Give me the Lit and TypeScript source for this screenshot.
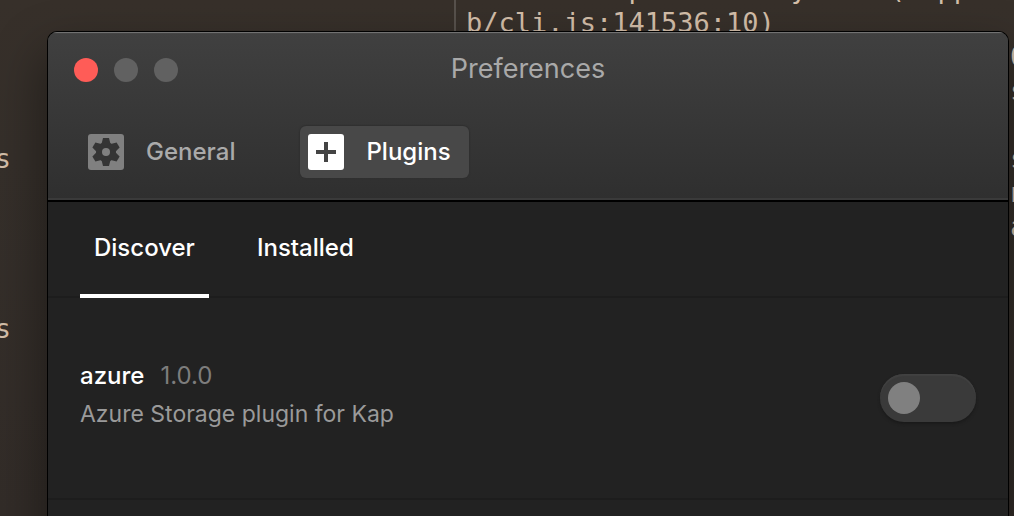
import { LitElement, html, css } from "lit";
import { customElement, property, state } from "lit/decorators.js";

interface Plugin {
  name: string;
  version: string;
  description: string;
}

const PLUGINS: Plugin[] = [
  { name: "azure", version: "1.0.0", description: "Azure Storage plugin for Kap" },
];

@customElement("terminal-backdrop")
class TerminalBackdrop extends LitElement {
  static styles = css`
    :host {
      display: flex;
      height: 100%;
      overflow: hidden;
      background: linear-gradient(#37302a, #352f2a 30%, #322c28);
      color: #d3bea9;
      font: 27px/34px "DejaVu Sans Mono", "Liberation Mono", monospace;
    }
    .pane {
      min-width: 0;
    }
    .lines {
      margin-top: -28px;
    }
    .left {
      flex: 0 0 454px;
    }
    .left .line {
      width: 11px;
      direction: rtl;
    }
    .right {
      flex: 1;
      border-left: 2px solid #57514c;
      padding-left: 10px;
    }
    .line {
      height: 34px;
      overflow: hidden;
      white-space: pre;
    }
    .edge {
      display: flex;
      justify-content: flex-end;
    }
    .edge span {
      width: 4px;
    }
  `;
  private left = ["", "", "", "", "", "s", "", "", "", "", "s"];
  private edge = ["0", "s", "", "s", "n", "a"];
  render() {
    return html`
      <div class="pane left">
        <div class="lines">${this.left.map((t) => html`<div class="line">${t}</div>`)}</div>
      </div>
      <div class="pane right">
        <div class="lines">
          <div class="line">          p         y     (/appl</div>
          <div class="line">b/cli.js:141536:10)</div>
          ${this.edge.map((t) => html`<div class="line edge"><span>${t}</span></div>`)}
        </div>
      </div>
    `;
  }
}

@customElement("plugin-row")
class PluginRow extends LitElement {
  @property({ attribute: false }) plugin!: Plugin;
  static styles = css`
    :host {
      display: flex;
      align-items: center;
      justify-content: space-between;
      height: 200px;
      padding: 0 32px;
      border-bottom: 2px solid #1d1d1d;
    }
    .text {
      padding-bottom: 6px;
    }
    .head {
      display: flex;
      gap: 16px;
      font-size: 24px;
      line-height: 38px;
      color: #fff;
    }
    .name {
      font-weight: 500;
    }
    .version {
      color: #7d7d7d;
    }
    .description {
      font-size: 23px;
      line-height: 38px;
      color: #9a9a9a;
    }
    .switch {
      appearance: none;
      display: flex;
      box-sizing: border-box;
      width: 96px;
      height: 48px;
      margin: 0;
      padding: 8px;
      border-radius: 24px;
      background: #3a3a3a;
      box-shadow: inset 0 2px 1px #414141, 0 2px 3px #1a1a1a;
    }
    .switch::before {
      content: "";
      width: 32px;
      height: 32px;
      border-radius: 50%;
      background: #808080;
    }
    .switch:checked {
      justify-content: flex-end;
    }
    .switch:checked::before {
      background: #fff;
    }
  `;
  render() {
    const p = this.plugin;
    return html`
      <label class="text" for="enabled">
        <div class="head"><span class="name">${p.name}</span><span class="version">${p.version}</span></div>
        <div class="description">${p.description}</div>
      </label>
      <input class="switch" id="enabled" type="checkbox" role="switch" />
    `;
  }
}

@customElement("app-root")
class AppRoot extends LitElement {
  @state() private tab = "Discover";
  static styles = css`
    :host {
      display: block;
      position: relative;
      height: 100vh;
      overflow: hidden;
      font-family: Inter, "Liberation Sans", sans-serif;
    }
    .window {
      position: absolute;
      top: 32px;
      left: 48px;
      right: 6px;
      bottom: -60px;
      border-radius: 9px;
      background: #222;
      box-shadow: 0 0 0 1px #000, 0 24px 50px 4px rgba(0, 0, 0, 0.4);
      overflow: hidden;
    }
    header {
      background: linear-gradient(#404040, #2f2f2f);
      box-shadow: inset 0 2px 1px -1px #777, inset 0 -2px #3a3a3a;
      border-bottom: 2px solid #000;
      padding-bottom: 22px;
    }
    .titlebar {
      display: grid;
      grid-template-columns: 1fr auto 1fr;
      align-items: center;
      height: 76px;
      padding: 0 26px;
    }
    .lights {
      display: flex;
      gap: 16px;
    }
    .light {
      width: 24px;
      height: 24px;
      padding: 0;
      border: 0;
      border-radius: 50%;
      background: #616161;
    }
    .close {
      background: #ff5c57;
    }
    h1 {
      margin: 0;
      padding-bottom: 2px;
      font: 400 27px/32px Inter, "Liberation Sans", sans-serif;
      color: #a9a9a9;
    }
    .toolbar {
      display: flex;
      gap: 47px;
      margin-top: 18px;
      padding: 0 32px;
    }
    .tool {
      display: flex;
      align-items: center;
      gap: 22px;
      height: 52px;
      padding: 0 18px 0 8px;
      border: 0;
      border-radius: 6px;
      background: none;
      color: #aaa;
      font: 500 24px/32px Inter, "Liberation Sans", sans-serif;
    }
    .tool.active {
      background: #484848;
      color: #fff;
      box-shadow: 0 0 1px 1px #303030;
    }
    .tool svg {
      display: block;
    }
    nav {
      display: flex;
      gap: 34px;
      height: 94px;
      padding: 0 32px;
      border-bottom: 2px solid #1d1d1d;
    }
    .tab {
      height: 96px;
      padding: 0 14px;
      border: 0;
      border-bottom: 4px solid transparent;
      background: none;
      color: #fff;
      font: 500 24px/32px Inter, "Liberation Sans", sans-serif;
    }
    .tab.active {
      border-color: #fff;
    }
  `;
  render() {
    return html`
      <terminal-backdrop></terminal-backdrop>
      <main class="window">
        <header>
          <div class="titlebar">
            <div class="lights">
              <button class="light close" aria-label="Close"></button>
              <button class="light" aria-label="Minimize"></button>
              <button class="light" aria-label="Zoom"></button>
            </div>
            <h1>Preferences</h1>
          </div>
          <div class="toolbar">
            <button class="tool">
              <svg width="36" height="36" viewBox="0 0 36 36">
                <rect width="36" height="36" rx="3" fill="#808080" />
                <g fill="#353535" transform="translate(18 18)">
                  <circle r="10" />
                  <path d="M-3-14H3L4.500-8V8L3 14H-3L-4.500 8V-8Z" />
                  <path transform="rotate(60)" d="M-3-14H3L4.500-8V8L3 14H-3L-4.500 8V-8Z" />
                  <path transform="rotate(120)" d="M-3-14H3L4.500-8V8L3 14H-3L-4.500 8V-8Z" />
                </g>
                <circle cx="18" cy="18" r="4" fill="#808080" />
              </svg>
              General
            </button>
            <button class="tool active">
              <svg width="36" height="36" viewBox="0 0 36 36">
                <rect width="36" height="36" rx="3" fill="#fff" />
                <path d="M16 8h4v8h8v4h-8v8h-4v-8H8v-4h8z" fill="#444" />
              </svg>
              Plugins
            </button>
          </div>
        </header>
        <nav>
          ${["Discover", "Installed"].map(
            (t) => html`<button class="tab ${t === this.tab ? "active" : ""}" @click=${() => (this.tab = t)}>${t}</button>`,
          )}
        </nav>
        ${PLUGINS.map((p) => html`<plugin-row .plugin=${p}></plugin-row>`)}
      </main>
    `;
  }
}
